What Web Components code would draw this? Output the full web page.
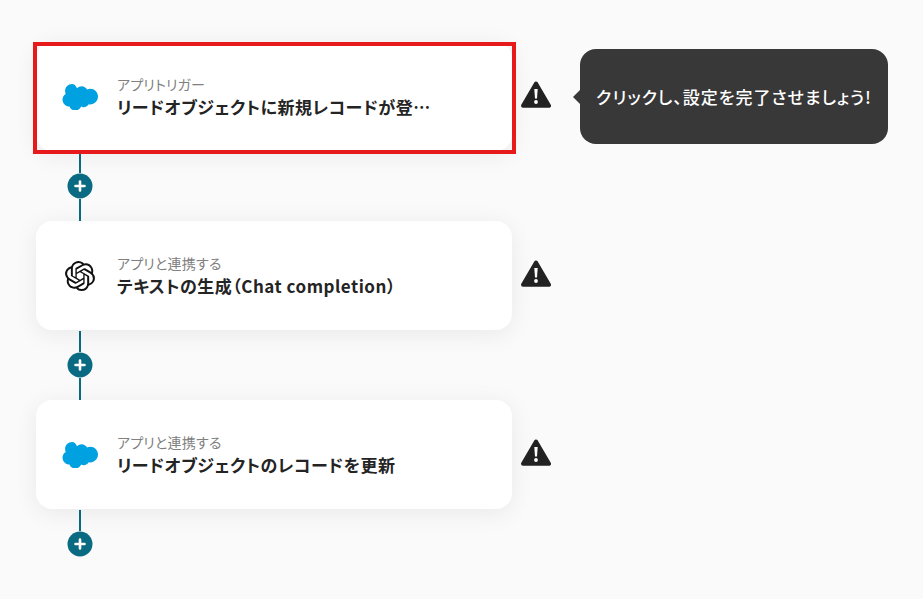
<!DOCTYPE html>
<html lang="ja">
<head>
<meta charset="utf-8">
<title>flow</title>
<style>
  html, body { margin: 0; height: 100%; background: #fafafa; }
  body { font-family: "Noto Sans CJK JP", "Noto Sans", sans-serif; overflow: hidden; }
  flow-list { padding: 42px 0 0 36px; }
</style>
</head>
<body>
<template id="sf-icon">
  <svg width="36" height="26" viewBox="0 0 36 26"><path fill="#00a1e0" d="M15 4.200C16.200 2.900 17.800 2.200 19.600 2.200c2.300 0 4.400 1.300 5.500 3.200 1-.4 2-.7 3.100-.7 4.300 0 7.800 3.500 7.800 7.900s-3.500 7.900-7.800 7.900c-.5 0-1-.1-1.500-.2-1 1.700-2.800 2.900-5 2.900-.9 0-1.700-.2-2.500-.6-1 2.300-3.200 3.900-5.800 3.900-2.700 0-5-1.700-5.900-4.100-.4.1-.8.100-1.200.1C3.400 22.200.5 19.300.5 15.600c0-2.400 1.300-4.600 3.200-5.700-.4-.9-.6-1.900-.6-3 0-3.800 3.100-6.900 7-6.900 2.000 0 3.800 1.600 4.900 4.200z"/></svg>
</template>
<template id="ai-icon">
  <svg width="30" height="30" viewBox="0 0 24 24"><path fill="#111" d="M22.280 9.820a5.980 5.980 0 0 0-.520-4.910 6.050 6.050 0 0 0-6.510-2.900A6.070 6.070 0 0 0 4.980 4.180a5.980 5.980 0 0 0-4 2.900 6.050 6.050 0 0 0 .740 7.100 5.980 5.980 0 0 0 .510 4.910 6.050 6.050 0 0 0 6.520 2.900A5.980 5.980 0 0 0 13.260 24a6.060 6.060 0 0 0 5.770-4.210 5.990 5.990 0 0 0 4-2.900 6.060 6.060 0 0 0-.750-7.070zM13.260 22.430a4.480 4.480 0 0 1-2.880-1.040l.140-.080 4.780-2.760a.79.79 0 0 0 .390-.680v-6.740l2.020 1.170a.070.070 0 0 1 .040.050v5.580a4.500 4.500 0 0 1-4.490 4.500zM3.600 18.300a4.470 4.470 0 0 1-.530-3.010l.140.090 4.780 2.760a.77.77 0 0 0 .780 0l5.840-3.370v2.330a.080.080 0 0 1-.030.060L9.740 19.950a4.500 4.500 0 0 1-6.140-1.650zM2.340 7.890a4.490 4.490 0 0 1 2.370-1.970V11.600a.770.770 0 0 0 .390.680l5.810 3.350-2.020 1.170a.080.080 0 0 1-.070 0l-4.830-2.790A4.500 4.500 0 0 1 2.340 7.870zm16.600 3.860L13.100 8.360 15.120 7.200a.080.080 0 0 1 .070 0l4.830 2.790a4.490 4.490 0 0 1-.680 8.100v-5.680a.790.790 0 0 0-.400-.660zm2.010-3.020l-.140-.090-4.770-2.780a.780.780 0 0 0-.790 0L9.410 9.230V6.900a.070.070 0 0 1 .030-.060l4.830-2.790a4.500 4.500 0 0 1 6.680 4.660zM8.310 12.860l-2.020-1.160a.080.080 0 0 1-.040-.060V6.080a4.500 4.500 0 0 1 7.380-3.450l-.140.080L8.700 5.470a.800.800 0 0 0-.390.680zm1.100-2.370l2.600-1.500 2.610 1.500v3l-2.600 1.500-2.610-1.500z"/></svg>
</template>

<flow-list>
  <flow-step app="salesforce" kind="アプリトリガー" selected tip="クリックし、設定を完了させましょう!">リードオブジェクトに新規レコードが登録されたら</flow-step>
  <flow-connector></flow-connector>
  <flow-step app="openai" kind="アプリと連携する">テキストの生成（Chat completion）</flow-step>
  <flow-connector></flow-connector>
  <flow-step app="salesforce" kind="アプリと連携する">リードオブジェクトのレコードを更新</flow-step>
  <flow-connector last></flow-connector>
</flow-list>

<script>
class FlowList extends HTMLElement {
    constructor() {
        super();
        this.attachShadow({ mode: 'open' });
        this.shadowRoot.innerHTML = `
        <style>
            :host { display: flex; flex-direction: column; align-items: flex-start; }
        </style>
        <slot></slot>`;
    }
}

class WarnIcon extends HTMLElement {
    constructor() {
        super();
        this.attachShadow({ mode: 'open' });
        this.shadowRoot.innerHTML = `
        <style>
            :host { display: block; width: 30px; height: 27px; }
            svg { display: block; }
        </style>
        <svg width="30" height="27" viewBox="0 0 30 27">
            <path fill="#222" stroke="#222" stroke-width="4" stroke-linejoin="round" d="M15 2.500 L28 24.800 L2 24.800 Z"/>
            <path fill="#fff" d="M13.300 8h3.400l-.7 9.500h-2z"/>
            <circle cx="15" cy="21" r="1.900" fill="#fff"/>
        </svg>`;
    }
}

class FlowTip extends HTMLElement {
    constructor() {
        super();
        this.attachShadow({ mode: 'open' });
        this.shadowRoot.innerHTML = `
        <style>
            :host {
                position: absolute;
                left: 544px;
                top: 7px;
                width: 308px;
                height: 95px;
                display: flex;
                align-items: center;
                justify-content: center;
                box-sizing: border-box;
                background: #383838;
                border-radius: 16px;
                color: #fff;
                font-size: 17px;
                letter-spacing: 1px;
                font-weight: 500;
                font-feature-settings: "palt";
                white-space: nowrap;
            }
            :host::before {
                content: "";
                position: absolute;
                left: -7px;
                top: 41px;
                border-style: solid;
                border-width: 7px 7px 7px 0;
                border-color: transparent #383838 transparent transparent;
            }
        </style>
        <slot></slot>`;
    }
}

class FlowStep extends HTMLElement {
    constructor() {
        super();
        this.attachShadow({ mode: 'open' });
    }

    connectedCallback() {
        const icon = document.getElementById(this.getAttribute('app') === 'openai' ? 'ai-icon' : 'sf-icon');
        const tip = this.getAttribute('tip');
        this.shadowRoot.innerHTML = `
        <style>
            :host { display: flex; align-items: center; position: relative; height: 110px; }
            .card {
                width: 476px;
                height: 109px;
                align-self: flex-start;
                box-sizing: border-box;
                display: flex;
                align-items: center;
                padding: 0 24px 0 26px;
                background: #fff;
                border-radius: 16px;
                box-shadow: 0 4px 24px rgba(0, 0, 0, .07);
            }
            .icon { width: 36px; display: flex; justify-content: center; flex: none; }
            .text { margin-left: 19px; margin-top: 2px; min-width: 0; flex: 1; }
            .kind { font-size: 14px; letter-spacing: .2px; line-height: 20px; margin-top: -2px; color: #808080; font-feature-settings: "palt"; }
            .title {
                font-size: 17px;
                letter-spacing: .5px;
                line-height: 25px;
                font-weight: 700;
                color: #242424;
                font-feature-settings: "palt";
                white-space: nowrap;
                overflow: hidden;
                text-overflow: ellipsis;
                max-width: 325px;
            }
            .warn { margin-left: 9px; margin-top: -6px; }
            .frame {
                position: absolute;
                left: -3px;
                top: 0;
                width: 483px;
                height: 112px;
                box-sizing: border-box;
                border: 4px solid #e61a1a;
            }
        </style>
        <div class="card">
            <div class="icon"></div>
            <div class="text">
                <div class="kind">${this.getAttribute('kind')}</div>
                <div class="title"><slot></slot></div>
            </div>
        </div>
        <warn-icon class="warn"></warn-icon>
        ${this.hasAttribute('selected') ? '<div class="frame"></div>' : ''}
        ${tip ? `<flow-tip>${tip}</flow-tip>` : ''}`;
        this.shadowRoot.querySelector('.icon').append(icon.content.cloneNode(true));
    }
}

class FlowConnector extends HTMLElement {
    constructor() {
        super();
        this.attachShadow({ mode: 'open' });
    }

    connectedCallback() {
        this.shadowRoot.innerHTML = `
        <style>
            :host {
                display: flex;
                flex-direction: column;
                align-items: center;
                width: 26px;
                height: ${this.hasAttribute('last') ? 46 : 69}px;
                margin-left: 31px;
            }
            .line { width: 2px; background: #0a6a82; flex: 1; }
            .line.top { flex: none; height: 21px; }
            .plus { flex: none; display: block; }
            ${this.hasAttribute('last') ? '.line.bottom { display: none; }' : ''}
        </style>
        <div class="line top"></div>
        <svg class="plus" width="26" height="26" viewBox="0 0 26 26">
            <circle cx="13" cy="13" r="12.500" fill="#0a6a82"/>
            <path d="M13 8.500v9M8.500 13h9" stroke="#fff" stroke-width="2.600" stroke-linecap="round"/>
        </svg>
        <div class="line bottom"></div>`;
    }
}

customElements.define('flow-list', FlowList);
customElements.define('warn-icon', WarnIcon);
customElements.define('flow-tip', FlowTip);
customElements.define('flow-step', FlowStep);
customElements.define('flow-connector', FlowConnector);
</script>
</body>
</html>
